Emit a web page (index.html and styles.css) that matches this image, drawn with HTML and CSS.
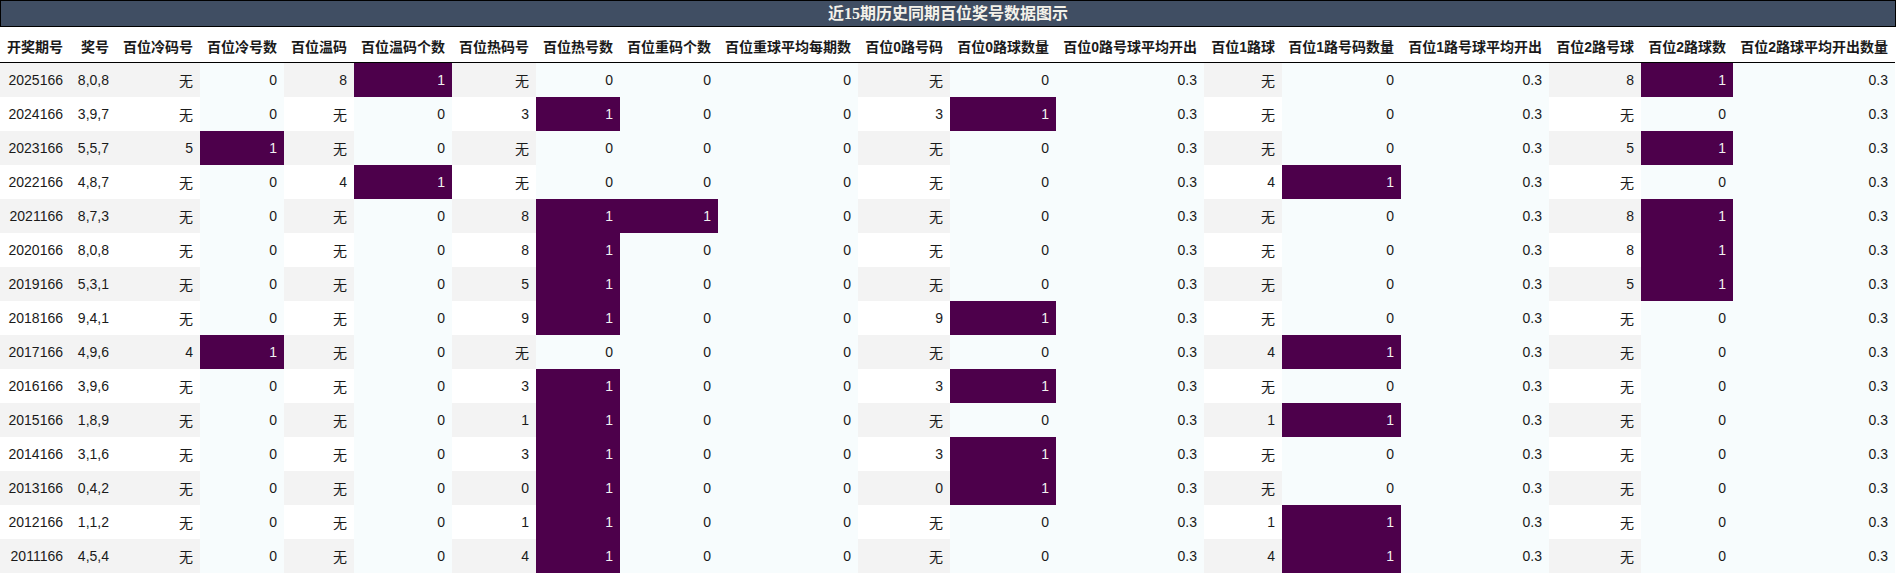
FILE: index.html
```html
<!DOCTYPE html>
<html lang="zh">
<head>
<meta charset="utf-8">
<title>近15期历史同期百位奖号数据图示</title>
<link rel="stylesheet" href="styles.css">
</head>
<body>
<div class="board">
  <div class="title">近15期历史同期百位奖号数据图示</div>
  <table class="grid">
    <colgroup>
      <col class="w70"><col class="w46"><col class="w84"><col class="w84"><col class="w70"><col class="w98"><col class="w84"><col class="w84"><col class="w98"><col class="w140"><col class="w92"><col class="w106"><col class="w148"><col class="w78"><col class="w119"><col class="w148"><col class="w92"><col class="w92"><col class="w162">
    </colgroup>
    <thead>
      <tr>
        <th>开奖期号</th><th>奖号</th><th>百位冷码号</th><th>百位冷号数</th><th>百位温码</th><th>百位温码个数</th><th>百位热码号</th><th>百位热号数</th><th>百位重码个数</th><th>百位重球平均每期数</th><th>百位0路号码</th><th>百位0路球数量</th><th>百位0路号球平均开出</th><th>百位1路球</th><th>百位1路号码数量</th><th>百位1路号球平均开出</th><th>百位2路号球</th><th>百位2路球数</th><th>百位2路球平均开出数量</th>
      </tr>
    </thead>
    <tbody>
      <tr><td>2025166</td><td>8,0,8</td><td>无</td><td class="g0">0</td><td>8</td><td class="g1">1</td><td>无</td><td class="g0">0</td><td class="g0">0</td><td class="g0">0</td><td>无</td><td class="g0">0</td><td class="g0">0.3</td><td>无</td><td class="g0">0</td><td class="g0">0.3</td><td>8</td><td class="g1">1</td><td class="g0">0.3</td></tr>
      <tr><td>2024166</td><td>3,9,7</td><td>无</td><td class="g0">0</td><td>无</td><td class="g0">0</td><td>3</td><td class="g1">1</td><td class="g0">0</td><td class="g0">0</td><td>3</td><td class="g1">1</td><td class="g0">0.3</td><td>无</td><td class="g0">0</td><td class="g0">0.3</td><td>无</td><td class="g0">0</td><td class="g0">0.3</td></tr>
      <tr><td>2023166</td><td>5,5,7</td><td>5</td><td class="g1">1</td><td>无</td><td class="g0">0</td><td>无</td><td class="g0">0</td><td class="g0">0</td><td class="g0">0</td><td>无</td><td class="g0">0</td><td class="g0">0.3</td><td>无</td><td class="g0">0</td><td class="g0">0.3</td><td>5</td><td class="g1">1</td><td class="g0">0.3</td></tr>
      <tr><td>2022166</td><td>4,8,7</td><td>无</td><td class="g0">0</td><td>4</td><td class="g1">1</td><td>无</td><td class="g0">0</td><td class="g0">0</td><td class="g0">0</td><td>无</td><td class="g0">0</td><td class="g0">0.3</td><td>4</td><td class="g1">1</td><td class="g0">0.3</td><td>无</td><td class="g0">0</td><td class="g0">0.3</td></tr>
      <tr><td>2021166</td><td>8,7,3</td><td>无</td><td class="g0">0</td><td>无</td><td class="g0">0</td><td>8</td><td class="g1">1</td><td class="g1">1</td><td class="g0">0</td><td>无</td><td class="g0">0</td><td class="g0">0.3</td><td>无</td><td class="g0">0</td><td class="g0">0.3</td><td>8</td><td class="g1">1</td><td class="g0">0.3</td></tr>
      <tr><td>2020166</td><td>8,0,8</td><td>无</td><td class="g0">0</td><td>无</td><td class="g0">0</td><td>8</td><td class="g1">1</td><td class="g0">0</td><td class="g0">0</td><td>无</td><td class="g0">0</td><td class="g0">0.3</td><td>无</td><td class="g0">0</td><td class="g0">0.3</td><td>8</td><td class="g1">1</td><td class="g0">0.3</td></tr>
      <tr><td>2019166</td><td>5,3,1</td><td>无</td><td class="g0">0</td><td>无</td><td class="g0">0</td><td>5</td><td class="g1">1</td><td class="g0">0</td><td class="g0">0</td><td>无</td><td class="g0">0</td><td class="g0">0.3</td><td>无</td><td class="g0">0</td><td class="g0">0.3</td><td>5</td><td class="g1">1</td><td class="g0">0.3</td></tr>
      <tr><td>2018166</td><td>9,4,1</td><td>无</td><td class="g0">0</td><td>无</td><td class="g0">0</td><td>9</td><td class="g1">1</td><td class="g0">0</td><td class="g0">0</td><td>9</td><td class="g1">1</td><td class="g0">0.3</td><td>无</td><td class="g0">0</td><td class="g0">0.3</td><td>无</td><td class="g0">0</td><td class="g0">0.3</td></tr>
      <tr><td>2017166</td><td>4,9,6</td><td>4</td><td class="g1">1</td><td>无</td><td class="g0">0</td><td>无</td><td class="g0">0</td><td class="g0">0</td><td class="g0">0</td><td>无</td><td class="g0">0</td><td class="g0">0.3</td><td>4</td><td class="g1">1</td><td class="g0">0.3</td><td>无</td><td class="g0">0</td><td class="g0">0.3</td></tr>
      <tr><td>2016166</td><td>3,9,6</td><td>无</td><td class="g0">0</td><td>无</td><td class="g0">0</td><td>3</td><td class="g1">1</td><td class="g0">0</td><td class="g0">0</td><td>3</td><td class="g1">1</td><td class="g0">0.3</td><td>无</td><td class="g0">0</td><td class="g0">0.3</td><td>无</td><td class="g0">0</td><td class="g0">0.3</td></tr>
      <tr><td>2015166</td><td>1,8,9</td><td>无</td><td class="g0">0</td><td>无</td><td class="g0">0</td><td>1</td><td class="g1">1</td><td class="g0">0</td><td class="g0">0</td><td>无</td><td class="g0">0</td><td class="g0">0.3</td><td>1</td><td class="g1">1</td><td class="g0">0.3</td><td>无</td><td class="g0">0</td><td class="g0">0.3</td></tr>
      <tr><td>2014166</td><td>3,1,6</td><td>无</td><td class="g0">0</td><td>无</td><td class="g0">0</td><td>3</td><td class="g1">1</td><td class="g0">0</td><td class="g0">0</td><td>3</td><td class="g1">1</td><td class="g0">0.3</td><td>无</td><td class="g0">0</td><td class="g0">0.3</td><td>无</td><td class="g0">0</td><td class="g0">0.3</td></tr>
      <tr><td>2013166</td><td>0,4,2</td><td>无</td><td class="g0">0</td><td>无</td><td class="g0">0</td><td>0</td><td class="g1">1</td><td class="g0">0</td><td class="g0">0</td><td>0</td><td class="g1">1</td><td class="g0">0.3</td><td>无</td><td class="g0">0</td><td class="g0">0.3</td><td>无</td><td class="g0">0</td><td class="g0">0.3</td></tr>
      <tr><td>2012166</td><td>1,1,2</td><td>无</td><td class="g0">0</td><td>无</td><td class="g0">0</td><td>1</td><td class="g1">1</td><td class="g0">0</td><td class="g0">0</td><td>无</td><td class="g0">0</td><td class="g0">0.3</td><td>1</td><td class="g1">1</td><td class="g0">0.3</td><td>无</td><td class="g0">0</td><td class="g0">0.3</td></tr>
      <tr><td>2011166</td><td>4,5,4</td><td>无</td><td class="g0">0</td><td>无</td><td class="g0">0</td><td>4</td><td class="g1">1</td><td class="g0">0</td><td class="g0">0</td><td>无</td><td class="g0">0</td><td class="g0">0.3</td><td>4</td><td class="g1">1</td><td class="g0">0.3</td><td>无</td><td class="g0">0</td><td class="g0">0.3</td></tr>
    </tbody>
  </table>
</div>
</body>
</html>
```

FILE: styles.css
```css
html, body {
  margin: 0;
  padding: 0;
  background: #ffffff;
}

.board {
  width: 1896px;
  font-family: "Liberation Sans", "Noto Sans CJK SC", sans-serif;
  color: #1a1a1a;
}

.title {
  height: 25px;
  line-height: 25px;
  border: 1px solid #000000;
  background: #404e63;
  color: #f4f2ea;
  text-align: center;
  font-family: "Liberation Serif", "Noto Sans CJK SC", serif;
  font-size: 16px;
  font-weight: bold;
}

.grid {
  table-layout: fixed;
  width: 1895px;
  border-collapse: separate;
  border-spacing: 0;
  font-size: 14px;
}

.w46 { width: 46px; }
.w70 { width: 70px; }
.w78 { width: 78px; }
.w84 { width: 84px; }
.w92 { width: 92px; }
.w98 { width: 98px; }
.w106 { width: 106px; }
.w119 { width: 119px; }
.w140 { width: 140px; }
.w148 { width: 148px; }
.w162 { width: 162px; }

.grid th {
  height: 36px;
  padding: 2px 7px 0 0;
  box-sizing: border-box;
  text-align: right;
  font-weight: bold;
  white-space: nowrap;
  background: #ffffff;
  border-bottom: 1px solid #000000;
}

.grid td {
  height: 34px;
  padding: 0 7px 0 0;
  box-sizing: border-box;
  text-align: right;
  white-space: nowrap;
  background: #ffffff;
}

.grid tbody tr:nth-child(odd) td {
  background: #f3f3f3;
}

.grid tbody tr td.g0 {
  background: #f7fcfd;
}

.grid tbody tr td.g1 {
  background: #4d004b;
  color: #f1f1f1;
}
```
